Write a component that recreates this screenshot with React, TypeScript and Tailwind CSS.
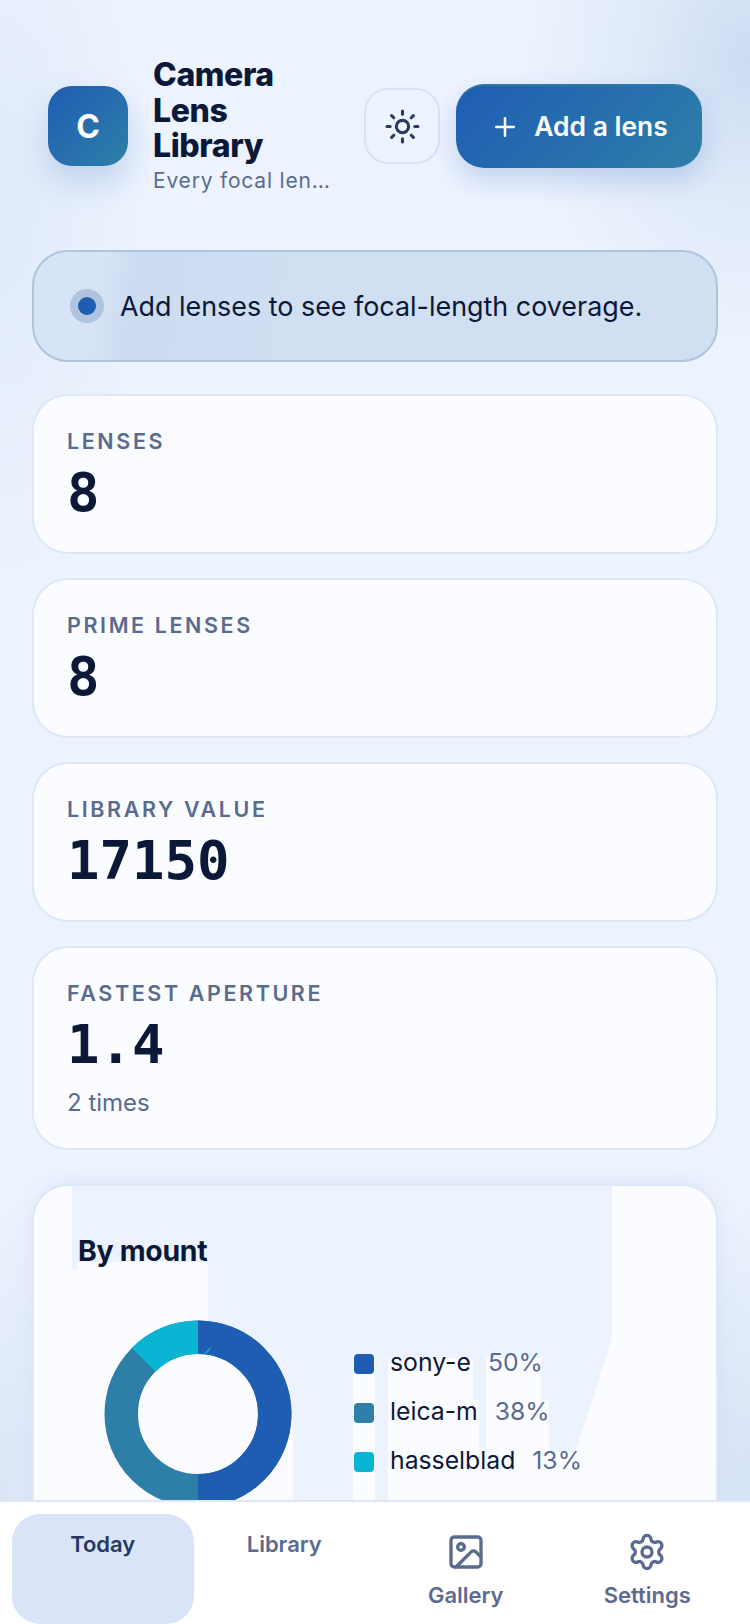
import React from "react";
import { Sun, Plus, Image as ImageIcon, Settings } from "lucide-react";

const Stat = ({ label, value, sub, h }: { label: string; value: string; sub?: string; h: string }) => (
  <div className={`${h} shrink-0 rounded-[36px] border-2 border-[#dce7f7] bg-[#fbfcff] pl-[33px] pr-[32px] pt-[30px]`}>
    <div className="text-[21.5px] leading-[30px] font-semibold tracking-[2.6px] text-[#5a6b8f]">{label}</div>
    <div className="mt-[6px] font-['DejaVu_Sans_Mono',monospace] text-[54px] leading-[62px] font-bold text-[#0c1838]">{value}</div>
    {sub && <div className="mt-[11px] text-[24px] leading-[32px] text-[#5a6b8f]">{sub}</div>}
  </div>
);

const Legend = ({ color, name, pct }: { color: string; name: string; pct: string }) => (
  <div className="flex h-[34px] items-center">
    <span className="h-[20px] w-[20px] rounded-[4px]" style={{ background: color }} />
    <span className="mb-[4px] ml-[16px] text-[24.75px] leading-[32px] text-[#0c1838]">{name}</span>
    <span className="mb-[4px] ml-[17px] text-[24.75px] leading-[32px] text-[#5a6b8f]">{pct}</span>
  </div>
);

export default function App() {
  return (
    <div className="relative flex h-[1624px] w-[750px] flex-col overflow-hidden bg-[radial-gradient(ellipse_240px_300px_at_100%_60px,#cbdcf2_0%,rgba(216,228,245,0.65)_45%,rgba(238,244,255,0)_100%),radial-gradient(ellipse_160px_420px_at_0%_200px,#e0eaf9_0%,rgba(238,244,255,0)_100%),radial-gradient(ellipse_90px_300px_at_100%_1500px,#d4e2f4_0%,rgba(238,244,255,0)_100%),radial-gradient(ellipse_70px_300px_at_0%_1500px,#d9e5f6_0%,rgba(238,244,255,0)_100%),linear-gradient(180deg,#eef4ff,#ecf2fe)] font-['Inter',sans-serif]">
      <div className="flex flex-1 flex-col overflow-hidden px-[32px]">
        <header className="flex h-[250px] shrink-0 items-center px-[16px] pt-[2px]">
          <div className="flex h-[80px] w-[80px] shrink-0 items-center justify-center rounded-[24px] bg-[linear-gradient(135deg,#1f5db3,#2e7fa8)] pt-[2px] text-[32px] font-bold text-white shadow-[0_16px_32px_rgba(31,93,179,0.2)]">C</div>
          <div className="ml-[25px] w-[186px] shrink-0">
            <div className="text-[32px] leading-[35.5px] font-extrabold tracking-[-0.4px] text-[#0c1838]">Camera<br />Lens<br />Library</div>
            <div className="mt-[2px] mb-[-1px] truncate text-[21px] leading-[30px] tracking-[0.8px] text-[#5a6b8f]">Every focal lengths</div>
          </div>
          <button className="ml-[25px] flex h-[76px] w-[76px] shrink-0 items-center justify-center rounded-[24px] border-2 border-[#d8e4f6] text-[#2a3a5e]">
            <Sun size={37} strokeWidth={2} />
          </button>
          <button className="ml-[16px] flex h-[84px] w-[246px] shrink-0 items-center justify-center gap-[14px] rounded-[28px] border-t-2 border-[#2f78a8] bg-[linear-gradient(135deg,#1f5db3,#2e7fa8)] text-[26.4px] font-semibold text-white shadow-[0_12px_28px_rgba(31,93,179,0.22)]">
            <Plus size={30} strokeWidth={2} />Add a lens
          </button>
        </header>

        <div className="flex h-[112px] shrink-0 items-center rounded-[36px] border-2 border-[#b0c4e0] bg-[linear-gradient(100deg,#d6e4f5_0%,#d6e4f5_10%,#ccdcf1_15%,#d0dff2_40%)] pl-[36px]">
          <span className="flex h-[34px] w-[34px] items-center justify-center rounded-full bg-[#b0c4e0]"><span className="h-[18px] w-[18px] rounded-full bg-[#1f5db3]" /></span>
          <span className="ml-[16px] text-[26.9px] text-[#0c1838]">Add lenses to see focal-length coverage.</span>
        </div>

        <div className="mt-[32px] flex flex-col gap-[24px]">
          <Stat label="LENSES" value="8" h="h-[160px]" />
          <Stat label="PRIME LENSES" value="8" h="h-[160px]" />
          <Stat label="LIBRARY VALUE" value="17150" h="h-[160px]" />
          <Stat label="FASTEST APERTURE" value="1.4" sub="2 times" h="h-[204px]" />
        </div>

        <section className="relative mt-[34px] h-[400px] shrink-0 overflow-hidden rounded-[36px] border-2 border-[#dce7f7] bg-[#fbfcff] px-[44px] pt-[47px] shadow-[0_0_24px_rgba(31,93,179,0.08)]">
          <svg width="682" height="400" viewBox="34 1186 682 400" className="absolute left-0 top-0">
            <path d="M72 1186H612V1335C608 1352 590 1410 575 1452H549V1400H541V1358H486V1448H479V1400H473V1358H388V1500H375V1354H353V1500H293V1414H275A77 77 0 0 0 208 1338V1262H78V1270H72Z" fill="#edf3fe" />
          </svg>
          <div className="relative text-[28.4px] leading-[36px] font-bold tracking-[-0.3px] text-[#0c1838]">By mount</div>
          <div className="relative mt-[51px] flex">
            <svg width="188" height="188" viewBox="0 0 188 188" className="ml-[26px] shrink-0">
              <circle cx="94" cy="94" r="76.75" fill="none" stroke="#2e7fa8" strokeWidth="33.5" />
              <path d="M94 17.25A76.75 76.75 0 0 1 94 170.75" fill="none" stroke="#1f5db3" strokeWidth="33.5" />
              <path d="M39.73 39.73A76.75 76.75 0 0 1 94 17.25" fill="none" stroke="#0ab5d4" strokeWidth="33.5" />
              <path d="M100 33.8Q105 33.5 107 26.5Q103 31 100 33.8Z" fill="#0ab5d4" />
            </svg>
            <div className="ml-[62px] mt-[27px] flex flex-col gap-[15px]">
              <Legend color="#1f5db3" name="sony-e" pct="50%" />
              <Legend color="#2e7fa8" name="leica-m" pct="38%" />
              <Legend color="#0ab5d4" name="hasselblad" pct="13%" />
            </div>
          </div>
        </section>
      </div>

      <nav className="absolute bottom-0 left-0 right-0 flex h-[124px] items-stretch border-t-2 border-[#dce7f7] bg-white px-[12px] pt-[12px]">
        <div className="flex flex-1 flex-col items-center rounded-[28px] bg-[#d9e5f6] pt-[15px] text-[22px] leading-[30px] font-semibold text-[#26385f]">Today</div>
        <div className="flex flex-1 flex-col items-center pt-[15px] text-[22px] leading-[30px] font-semibold text-[#5a6b8f]">Library</div>
        <div className="flex flex-1 flex-col items-center pt-[18px] text-[22px] leading-[30px] font-semibold text-[#5a6b8f]"><ImageIcon size={40} strokeWidth={2} /><span className="mt-[8px]">Gallery</span></div>
        <div className="flex flex-1 flex-col items-center pt-[18px] text-[22px] leading-[30px] font-semibold text-[#5a6b8f]"><Settings size={40} strokeWidth={2} /><span className="mt-[8px]">Settings</span></div>
      </nav>
    </div>
  );
}
